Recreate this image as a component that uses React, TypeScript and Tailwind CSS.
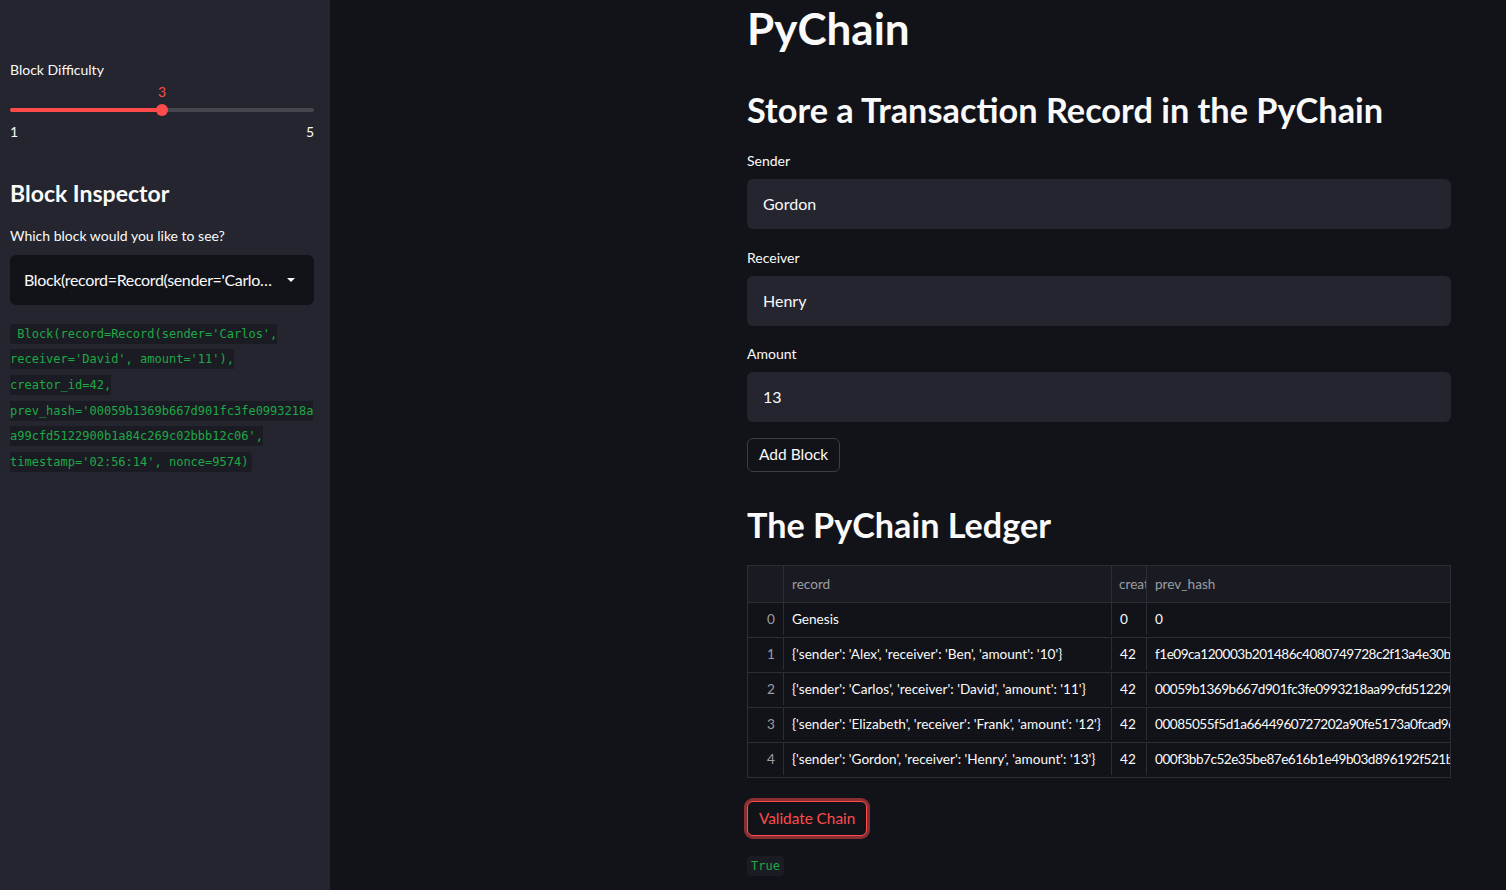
import React from "react";

const SANS = { fontFamily: "Lato, 'Noto Sans', sans-serif" } as React.CSSProperties;
const MONO = { fontFamily: "'DejaVu Sans Mono', 'Liberation Mono', monospace" } as React.CSSProperties;

const codeLines = [
  " Block(record=Record(sender='Carlos',",
  "receiver='David', amount='11'),",
  "creator_id=42,",
  "prev_hash='00059b1369b667d901fc3fe0993218a",
  "a99cfd5122900b1a84c269c02bbb12c06',",
  "timestamp='02:56:14', nonce=9574)",
];

const rows = [
  ["0", "Genesis", "0", "0"],
  ["1", "{'sender': 'Alex', 'receiver': 'Ben', 'amount': '10'}", "42", "f1e09ca120003b201486c4080749728c2f13a4e30bbc1"],
  ["2", "{'sender': 'Carlos', 'receiver': 'David', 'amount': '11'}", "42", "00059b1369b667d901fc3fe0993218aa99cfd5122900b1a84"],
  ["3", "{'sender': 'Elizabeth', 'receiver': 'Frank', 'amount': '12'}", "42", "00085055f5d1a6644960727202a90fe5173a0fcad9d9a"],
  ["4", "{'sender': 'Gordon', 'receiver': 'Henry', 'amount': '13'}", "42", "000f3bb7c52e35be87e616b1e49b03d896192f521bc2a"],
];

function Field({ label, value }: { label: string; value: string }) {
  return (
    <div className="flex flex-col">
      <div className="h-[20px] text-[14px] leading-[20px] text-[#fafafa]">{label}</div>
      <div className="mt-[8px] flex h-[50px] items-center rounded-[6px] bg-[#24252e] px-[16px] text-[16px] text-[#fafafa]">
        {value}
      </div>
    </div>
  );
}

export default function App() {
  return (
    <div className="flex h-[890px] w-[1506px] overflow-hidden bg-[#121319] text-[#fafafa]" style={SANS}>
      {/* Sidebar */}
      <aside className="flex h-full w-[330px] shrink-0 flex-col bg-[#24252e] px-[10px] pt-[60px]">
        <div className="h-[20px] text-[14px] leading-[20px]">Block Difficulty</div>
        <div className="relative mt-[8px] h-[34px] w-[304px]">
          <div className="absolute left-[146px] top-[-6px] w-[12px] text-center text-[14px] leading-[20px] text-[#ff4b4b]">3</div>
          <div className="absolute left-0 top-[20px] h-[4px] w-[304px] rounded-full bg-[#45464e]" />
          <div className="absolute left-0 top-[20px] h-[4px] w-[152px] rounded-full bg-[#ff4b4b]" />
          <div className="absolute left-[146px] top-[16px] h-[12px] w-[12px] rounded-full bg-[#ff4b4b]" />
        </div>
        <div className="flex h-[20px] w-[304px] justify-between text-[14px] leading-[20px]">
          <span>1</span>
          <span>5</span>
        </div>
        <h2 className="mt-[34px] h-[34px] text-[23px] font-bold leading-[34px]">Block Inspector</h2>
        <div className="mt-[16px] h-[20px] text-[14px] leading-[20px]">Which block would you like to see?</div>
        <div className="mt-[9px] flex h-[50px] w-[304px] items-center justify-between rounded-[6px] bg-[#121319] pl-[14px] pr-[18px] text-[16px]">
          <span className="overflow-hidden whitespace-nowrap tracking-[-0.35px]">Block(record=Record(sender='Carlo…</span>
          <svg width="10" height="6" viewBox="0 0 10 6" className="ml-[6px] shrink-0">
            <polygon points="1,1 9,1 5,5" fill="#fafafa" />
          </svg>
        </div>
        <div className="mt-[16px] flex flex-col" style={MONO}>
          {codeLines.map((l, i) => (
            <div key={i} className="flex h-[25.6px] items-center">
              <span
                className={
                  "h-[20px] whitespace-pre bg-[#1b1c23] text-[12px] leading-[20px] text-[#1ea846] " +
                  (i === 0 ? "rounded-l-[4px] " : "") +
                  (i === codeLines.length - 1 ? "rounded-r-[4px] pr-[4px]" : "")
                }
              >
                {l}
              </span>
            </div>
          ))}
        </div>
      </aside>

      {/* Main */}
      <main className="flex-1 pl-[417px]">
        <div className="flex w-[704px] flex-col">
          <h1 className="h-[56px] text-[44px] font-bold leading-[56px]">PyChain</h1>
          <h2 className="mt-[32px] h-[44px] text-[34.3px] font-bold leading-[44px]">Store a Transaction Record in the PyChain</h2>
          <div className="mt-[19px] flex flex-col gap-[18.5px]">
            <Field label="Sender" value="Gordon" />
            <Field label="Receiver" value="Henry" />
            <Field label="Amount" value="13" />
          </div>
          <div className="mt-[16px] flex">
            <button className="h-[34px] rounded-[6px] border border-[#3d3e45] bg-[#121319] px-[11px] text-[15.5px] text-[#fafafa]">
              Add Block
            </button>
          </div>
          <h2 className="mt-[31px] h-[44px] text-[34.2px] font-bold leading-[44px]">The PyChain Ledger</h2>
          <div className="mt-[18px] w-[704px] overflow-hidden border border-[#2c2d35] text-[13.6px]">
            <div className="grid h-[36px] grid-cols-[35px_328px_35px_304px] bg-[#1a1b22] text-[#9c9da3]">
              <div />
              <div className="flex items-center overflow-hidden whitespace-nowrap border-l border-[#2c2d35] pl-[8px]">record</div>
              <div className="flex items-center overflow-hidden whitespace-nowrap border-l border-[#2c2d35] pl-[7px]">creator_id</div>
              <div className="flex items-center overflow-hidden whitespace-nowrap border-l border-[#2c2d35] pl-[8px]">prev_hash</div>
            </div>
            {rows.map((r, i) => (
              <div key={i} className="grid h-[35px] grid-cols-[35px_328px_35px_304px] border-t border-[#2c2d35] pb-[2px]">
                <div className="flex items-center justify-end px-[8px] text-[#9c9da3]">{r[0]}</div>
                <div className="flex items-center overflow-hidden whitespace-nowrap border-l border-[#2c2d35] pl-[8px]">{r[1]}</div>
                <div className="flex items-center overflow-hidden whitespace-nowrap border-l border-[#2c2d35] pl-[8px]">{r[2]}</div>
                <div className="flex items-center overflow-hidden whitespace-nowrap border-l border-[#2c2d35] pl-[8px] tracking-[-0.5px]">{r[3]}</div>
              </div>
            ))}
          </div>
          <div className="mt-[23px] flex">
            <button className="h-[35px] rounded-[6px] border border-[#ff4b4b] bg-[#121319] px-[11px] text-[15.3px] text-[#ff4b4b] shadow-[0_0_0_3px_rgba(255,75,75,0.5)]">
              Validate Chain
            </button>
          </div>
          <div className="mt-[20px] flex">
            <span className="h-[20px] rounded-[4px] bg-[#1b1c23] px-[4px] text-[12px] leading-[20px] text-[#1ea846]" style={MONO}>
              True
            </span>
          </div>
        </div>
      </main>
    </div>
  );
}
